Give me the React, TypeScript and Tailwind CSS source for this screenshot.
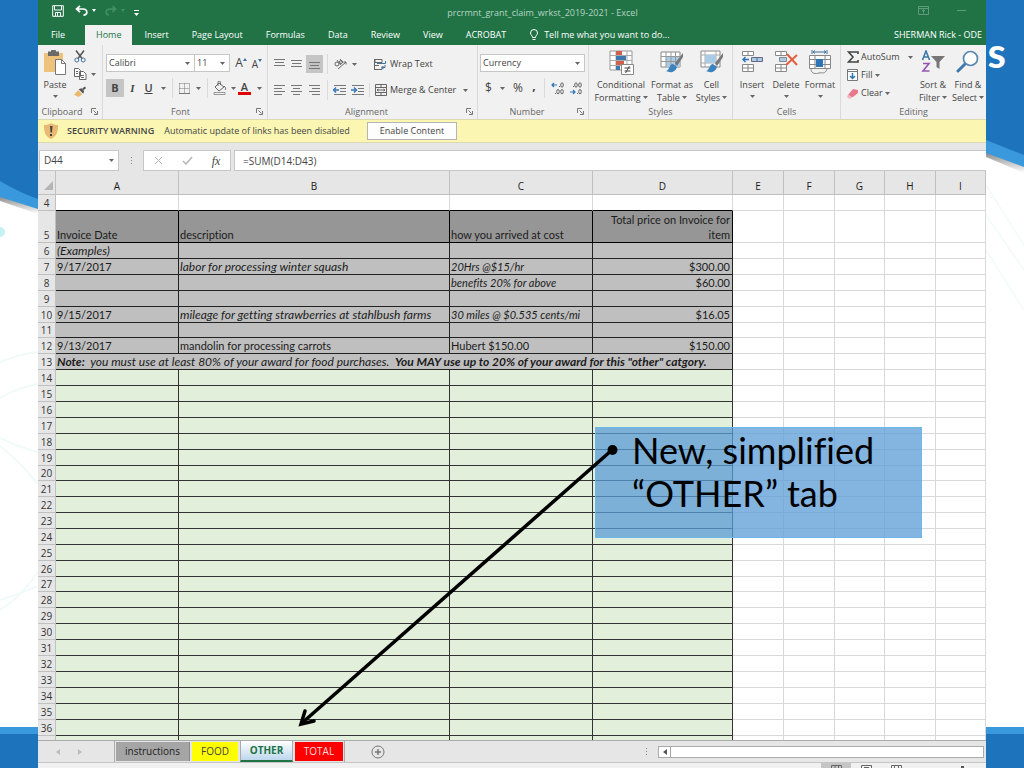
import { ReactNode } from "react";

const FONT_UI = "font-['Open_Sans','Noto_Sans',sans-serif]";
const FONT_CELL = "font-['Lato','Noto_Sans',sans-serif] [font-variant-ligatures:none]";

const Caret = ({ className = "" }: { className?: string }) => (
  <svg className={`shrink-0 ${className}`} width="5" height="3" viewBox="0 0 5 3" aria-hidden="true">
    <path d="M0 0h5L2.5 3z" fill="#666" />
  </svg>
);

const Launcher = () => (
  <button type="button" aria-label="More options" className="absolute right-1 bottom-1">
    <svg width="7" height="7" viewBox="0 0 7 7" fill="none" stroke="#777">
      <path d="M.5 5V.5H5M2.5 2.5l3 3M6.5 3v3.5H3" />
    </svg>
  </button>
);

const Group = ({
  label,
  className,
  launcher,
  children,
}: {
  label: string;
  className: string;
  launcher?: boolean;
  children: ReactNode;
}) => (
  <section aria-label={label} className={`relative flex h-[74px] flex-col ${className}`}>
    <div className="h-[60px]">{children}</div>
    <p className="text-center leading-[14px] text-[#666]">{label}</p>
    {launcher && <Launcher />}
  </section>
);

const Divider = () => <span className="h-5 w-px shrink-0 bg-[#dadada]" />;

const Combo = ({ label, value, className }: { label: string; value: string; className: string }) => (
  <span className={`flex h-[18px] items-center border border-[#c6c6c6] bg-white pr-1 ${className}`}>
    <select aria-label={label} className="min-w-0 flex-1 appearance-none bg-transparent pl-0.5 leading-4 outline-none">
      <option>{value}</option>
    </select>
    <Caret />
  </span>
);

const Tool = ({
  label,
  active,
  className = "",
  children,
}: {
  label: string;
  active?: boolean;
  className?: string;
  children: ReactNode;
}) => (
  <button
    type="button"
    aria-label={label}
    className={`flex h-[18px] shrink-0 items-center justify-center ${active ? "bg-[#c5c5c5]" : ""} ${className}`}
  >
    {children}
  </button>
);

const BigTool = ({
  lines,
  inlineCaret,
  className,
  children,
}: {
  lines: string[];
  inlineCaret?: boolean;
  className: string;
  children: ReactNode;
}) => (
  <button type="button" className={`flex shrink-0 flex-col items-center pt-[5px] leading-[13px] whitespace-nowrap ${className}`}>
    <span className="flex h-7 items-start">{children}</span>
    {lines.map((line, i) => (
      <span key={line} className="flex items-center gap-0.5">
        {line}
        {inlineCaret && i === lines.length - 1 && <Caret />}
      </span>
    ))}
    {!inlineCaret && <Caret className="mt-1" />}
  </button>
);

const Lines = ({ rows }: { rows: [number, number, number][] }) => (
  <svg width="12" height="12" viewBox="0 0 12 12" stroke="#777" aria-hidden="true">
    {rows.map(([x1, x2, y]) => (
      <path key={y} d={`M${x1} ${y + 0.5}H${x2}`} />
    ))}
  </svg>
);

const Indent = ({ right }: { right?: boolean }) => (
  <svg width="14" height="12" viewBox="0 0 14 12" fill="none" aria-hidden="true">
    <path d="M1 1.5h12M7 4.5h6M7 7.5h6M1 10.5h12" stroke="#777" />
    <path d={right ? "M0 6h4M3 3.5L5.5 6 3 8.5" : "M2 6h4M3 3.5L.5 6 3 8.5"} stroke="#2f75b5" strokeWidth="1.5" />
  </svg>
);

const Decimal = ({ label, increase }: { label: string; increase?: boolean }) => (
  <Tool label={label} className="w-[18px]">
    <svg width="14" height="13" viewBox="0 0 14 13" fill="none" aria-hidden="true">
      <g stroke="#666">
        <ellipse cx="11" cy="3" rx="1.3" ry="2.2" />
        <ellipse cx="11" cy="9.7" rx="1.3" ry="2.2" />
        {increase ? <ellipse cx="7" cy="9.7" rx="1.3" ry="2.2" /> : <ellipse cx="7" cy="3" rx="1.3" ry="2.2" />}
      </g>
      <path d={increase ? "M8 4.5h1M4 11.5h1" : "M4 4.5h1M8 11.5h1"} stroke="#666" />
      <path d={increase ? "M1 3h5M3 1L1 3l2 2" : "M1 10h5M4 8l2 2-2 2"} stroke="#2f75b5" strokeWidth="1.2" />
    </svg>
  </Tool>
);

const Brush = () => (
  <>
    <path d="M23 3l-8 10 2 3 6-9z" fill="#777" />
    <path d="M13 14c-4 0-3 6-7 7 4 2 9 2 11-4z" fill="#3c82bf" />
  </>
);

const TitleBar = () => (
  <header className="relative flex h-[25px] shrink-0 items-center bg-[#217346] text-[#b5d3c2]">
    <div className="flex items-center gap-[9px] pl-[14px] pb-1">
      <button type="button" aria-label="Save">
        <svg width="12" height="12" viewBox="0 0 12 12" fill="none" stroke="#fff">
          <path d="M.7.7h10.6v10.6H.7zM2.5 1v4h7V1M3.5 11V7.5h5V11M5.5 8v3" />
        </svg>
      </button>
      <button type="button" aria-label="Undo" className="flex items-center gap-1 pl-0.5">
        <svg width="13" height="11" viewBox="0 0 13 11" fill="none" stroke="#fff" strokeWidth="1.7">
          <path d="M5 .8L1.5 4 5 7.2M1.5 4H8c5 0 5 6 .5 6.2" />
        </svg>
        <svg width="4" height="3" viewBox="0 0 4 3"><path d="M0 0h4L2 3z" fill="#fff" /></svg>
      </button>
      <button type="button" aria-label="Redo" className="flex items-center gap-1">
        <svg width="12" height="11" viewBox="0 0 13 11" fill="none" stroke="#448e64" strokeWidth="1.7">
          <path d="M8 .8L11.5 4 8 7.2M11.5 4H5C0 4 0 10 4.5 10.2" />
        </svg>
        <svg width="4" height="3" viewBox="0 0 4 3"><path d="M0 0h4L2 3z" fill="#448e64" /></svg>
      </button>
      <button type="button" aria-label="Customize toolbar" className="pt-1">
        <svg width="5" height="6" viewBox="0 0 5 6"><path d="M0 0h5v1H0zM0 3h5L2.5 6z" fill="#fff" /></svg>
      </button>
    </div>
    <h1 className="flex-1 pl-7 text-center text-[9px]">prcrmnt_grant_claim_wrkst_2019-2021 - Excel</h1>
    <div className="flex items-center gap-7 pr-5 pb-1">
      <button type="button" aria-label="Ribbon display options">
        <svg width="11" height="9" viewBox="0 0 11 9" fill="none" stroke="#5f9d7a">
          <path d="M.5.5h10v8H.5zM.5 2.5h10M5.5 7.5v-4M4 5l1.5-1.5L7 5" />
        </svg>
      </button>
      <button type="button" aria-label="Minimize">
        <svg width="9" height="9" viewBox="0 0 9 9" stroke="#5f9d7a"><path d="M0 4.5h9" /></svg>
      </button>
    </div>
  </header>
);

const TABS = ["Insert", "Page Layout", "Formulas", "Data", "Review", "View", "ACROBAT"];

const TabBar = () => (
  <nav className="flex h-5 shrink-0 items-stretch gap-px bg-[#217346] text-[9px] text-white">
    <button type="button" className="w-10 shrink-0">File</button>
    <button type="button" className="ml-1.5 bg-[#f1f1f1] px-[11px] text-[#217346]">Home</button>
    {TABS.map((tab) => (
      <button type="button" key={tab} className="px-[11px] whitespace-nowrap">{tab}</button>
    ))}
    <button type="button" className="ml-3 flex items-center gap-1.5 whitespace-nowrap">
      <svg width="8" height="12" viewBox="0 0 8 12" fill="none" stroke="#fff">
        <path d="M2.5 8.5c0-2-2-2.5-2-4.5a3.5 3.5 0 0 1 7 0c0 2-2 2.5-2 4.5zM2.5 10.5h3" />
      </svg>
      Tell me what you want to do...
    </button>
    <span className="ml-auto self-center pr-1 whitespace-nowrap">SHERMAN Rick - ODE</span>
  </nav>
);

const ClipboardGroup = () => (
  <Group label="Clipboard" launcher className="w-[65px] border-r border-[#dadada] pr-4">
    <div className="flex">
      <BigTool lines={["Paste"]} className="w-[34px]">
        <svg width="24" height="25" viewBox="0 0 24 25">
          <path d="M1 3h19v19H1z" fill="#eec27c" />
          <path d="M5 1.5h3a2.5 2.5 0 0 1 5 0h3V6H5z" fill="#6a6a6a" />
          <path d="M12.5 9.5h6l4 4v11h-10z" fill="#fff" stroke="#777" />
          <path d="M18.5 9.5v4h4" fill="none" stroke="#777" />
        </svg>
      </BigTool>
      <div className="flex flex-col items-start gap-0.5 pt-[3px] pl-0.5">
        <Tool label="Cut" className="h-4! w-3">
          <svg width="12" height="13" viewBox="0 0 12 13" fill="none">
            <path d="M2 .5l6 8M10 .5l-6 8" stroke="#555" strokeWidth="1.5" />
            <circle cx="2.8" cy="10" r="2" stroke="#41719c" />
            <circle cx="9.2" cy="10" r="2" stroke="#41719c" />
          </svg>
        </Tool>
        <Tool label="Copy" className="h-4! gap-1">
          <svg width="13" height="12" viewBox="0 0 13 12" fill="#fff" stroke="#666">
            <path d="M.5.5h4l2 2v6h-6zM5.5 3.5h4l2.5 2.5v5.5H5.5zM2 3.5h2M2 5.5h2M7 7.5h3M7 9.5h3" />
          </svg>
          <Caret />
        </Tool>
        <Tool label="Format Painter" className="h-4! w-3">
          <svg width="13" height="12" viewBox="0 0 13 12">
            <path d="M9 2l3-2 1 2-3 2zM5 3l5 5 1-3-3-3z" fill="#555" />
            <path d="M4.5 4l4.5 4.5-4 3L0 9z" fill="#eab96e" />
          </svg>
        </Tool>
      </div>
    </div>
  </Group>
);

const FontGroup = () => (
  <Group label="Font" launcher className="w-[165px] border-r border-[#dadada] pr-3 pl-[3px]">
    <div className="flex items-center pt-[9px]">
      <Combo label="Font name" value="Calibri" className="w-[89px] shrink-0" />
      <Combo label="Font size" value="11" className="w-[35px] shrink-0 border-l-0" />
      <Tool label="Increase font size" className="w-[18px] pl-1 text-[12px]">
        A<svg className="mb-2" width="4" height="3" viewBox="0 0 4 3"><path d="M0 3h4L2 0z" fill="#41719c" /></svg>
      </Tool>
      <Tool label="Decrease font size" className="w-[18px] pt-0.5 text-[10px]">
        A<svg className="mb-2" width="4" height="3" viewBox="0 0 4 3"><path d="M0 0h4L2 3z" fill="#41719c" /></svg>
      </Tool>
    </div>
    <div className="flex items-center pt-1.5 text-[11px]">
      <Tool label="Bold" active className="w-[18px] font-bold">B</Tool>
      <Tool label="Italic" className="w-[17px] font-['Liberation_Serif',serif] font-bold italic">I</Tool>
      <Tool label="Underline" className="w-7 gap-2"><span className="font-semibold underline">U</span><Caret /></Tool>
      <span className="w-[3px] shrink-0" />
      <Divider />
      <Tool label="Borders" className="w-[34px] gap-1.5">
        <svg width="11" height="11" viewBox="0 0 11 11" fill="none" stroke="#777">
          <path d="M.5.5h10v10M.5.5v10M5.5.5v10M.5 5.5h10" strokeDasharray="1 1" />
          <path d="M0 10.5h11" />
        </svg>
        <Caret />
      </Tool>
      <Divider />
      <span className="w-1 shrink-0" />
      <Tool label="Fill color" className="w-6 gap-1">
        <svg width="14" height="14" viewBox="0 0 14 14" fill="none" stroke="#666">
          <path d="M6 2L2 6l4 4 5-4zM5 5V1.5a1 1 0 0 1 2.5 0V4M11 5c2 2 2 3 1 4" />
          <path d="M1 11.5h11v2H1z" stroke="#999" />
        </svg>
        <Caret />
      </Tool>
      <Tool label="Font color" className="w-7 gap-1.5">
        <span className="flex flex-col items-center">
          <span className="h-[11px] text-[11px] leading-[11px] font-semibold">A</span>
          <span className="h-[3px] w-[13px] bg-[#e00000]" />
        </span>
        <Caret />
      </Tool>
    </div>
  </Group>
);

const AlignmentGroup = () => (
  <Group label="Alignment" launcher className="w-[210px] border-r border-[#dadada] pr-3">
    <div className="flex items-center pt-[9px] pl-[3px]">
      <Tool label="Top align" className="w-[17px]"><Lines rows={[[0, 11, 1], [1, 10, 4], [0, 11, 7]]} /></Tool>
      <Tool label="Middle align" className="w-[18px]"><Lines rows={[[0, 11, 2], [1, 10, 5], [0, 11, 8]]} /></Tool>
      <Tool label="Bottom align" active className="w-[17px]"><Lines rows={[[0, 11, 4], [1, 10, 7], [0, 11, 10]]} /></Tool>
      <span className="w-1 shrink-0" />
      <Divider />
      <Tool label="Orientation" className="w-[34px] gap-1">
        <svg width="14" height="12" viewBox="0 0 14 12" fill="none" stroke="#666">
          <circle cx="3" cy="6" r="2" />
          <path d="M3 2l4 5M6 1l3 4" />
          <circle cx="7" cy="4" r="1.5" />
          <path d="M4 11l8-7M9.5 4H12v2.5" />
        </svg>
        <Caret />
      </Tool>
      <span className="w-2 shrink-0" />
      <button type="button" className="flex items-center gap-[3px] pl-1 whitespace-nowrap">
        <svg width="13" height="13" viewBox="0 0 13 13" fill="none" stroke="#666">
          <path d="M.5 1v11M1 1.5h7v3H1zM1 7.5h4M1 11.5h7v-3" />
          <path d="M3 5.5h8.5V3M8 9.5h3V7M9.5 8L8 9.5 9.5 11" stroke="#41719c" />
        </svg>
        Wrap Text
      </button>
    </div>
    <div className="flex items-center pt-1.5 pl-[3px]">
      <Tool label="Align left" className="w-[17px]"><Lines rows={[[0, 11, 1], [0, 8, 4], [0, 11, 7], [0, 8, 10]]} /></Tool>
      <Tool label="Center" className="w-[18px]"><Lines rows={[[0, 11, 1], [2, 9, 4], [0, 11, 7], [2, 9, 10]]} /></Tool>
      <Tool label="Align right" className="w-[17px]"><Lines rows={[[0, 11, 1], [3, 11, 4], [0, 11, 7], [3, 11, 10]]} /></Tool>
      <span className="w-1 shrink-0" />
      <Divider />
      <span className="w-[3px] shrink-0" />
      <Tool label="Decrease indent" className="w-[18px]"><Indent /></Tool>
      <Tool label="Increase indent" className="w-[18px]"><Indent right /></Tool>
      <span className="w-0.5 shrink-0" />
      <button type="button" className="flex items-center gap-[3px] border-l border-[#dadada] pl-[5px] whitespace-nowrap">
        <svg width="12" height="12" viewBox="0 0 12 12" fill="none" stroke="#666">
          <path d="M.5.5h11v11H.5zM.5 3.5h11M.5 8.5h11M6 .5v3M6 8.5v3M2 6h8M3.5 5L2 6l1.5 1M8.5 5L10 6 8.5 7" />
        </svg>
        Merge &amp; Center
        <Caret className="ml-1" />
      </button>
    </div>
  </Group>
);

const NumberGroup = () => (
  <Group label="Number" launcher className="w-[111px] border-r border-[#dadada] pr-3">
    <div className="flex pt-[9px] pl-0.5">
      <Combo label="Number format" value="Currency" className="w-[105px] shrink-0" />
    </div>
    <div className="flex items-center pt-1.5 pl-1 text-[12px]">
      <Tool label="Accounting format" className="w-[26px] gap-2">$<Caret /></Tool>
      <Tool label="Percent style" className="w-5">%</Tool>
      <Tool label="Comma style" className="w-3 pb-1 font-bold">,</Tool>
      <span className="w-1 shrink-0" />
      <Divider />
      <span className="w-1 shrink-0" />
      <Decimal label="Increase decimal" increase />
      <Decimal label="Decrease decimal" />
    </div>
  </Group>
);

const StylesGroup = () => (
  <Group label="Styles" className="w-[144px] border-r border-[#dadada]">
    <div className="flex pl-0.5">
      <BigTool lines={["Conditional", "Formatting"]} inlineCaret className="w-[60px]">
        <svg width="25" height="25" viewBox="0 0 25 25" fill="none">
          <path d="M1 1h22v19H1z" fill="#fff" stroke="#999" />
          <path d="M1 5.5h22M1 10.5h22M1 15.5h22M7 1v19M18 1v19" stroke="#aaa" />
          <path d="M7 1h6v4H7zM7 11h8v4H7z" fill="#d0604d" />
          <path d="M7 6h10v4H7zM7 16h4v4H7z" fill="#3f78ad" />
          <path d="M12.5 14.5h12v10h-12z" fill="#fff" stroke="#888" />
          <path d="M15.5 18h6M15.5 21h6M20.5 16l-4 7" stroke="#444" />
        </svg>
      </BigTool>
      <BigTool lines={["Format as", "Table"]} inlineCaret className="w-[42px]">
        <svg width="24" height="24" viewBox="0 0 24 24" fill="none">
          <path d="M1 2h19v15H1z" fill="#fff" stroke="#888" />
          <path d="M6 7h14v10H6z" fill="#a9cbe6" />
          <path d="M1 6.5h19M1 11.5h19M6 2v15M11 2v15M15.5 2v15" stroke="#999" />
          <Brush />
        </svg>
      </BigTool>
      <BigTool lines={["Cell", "Styles"]} inlineCaret className="w-[37px]">
        <svg width="24" height="24" viewBox="0 0 24 24" fill="none">
          <path d="M1 1h19v16H1z" fill="#fff" stroke="#888" />
          <path d="M1 5h19M1 13h19M5 1v16M16 1v16" stroke="#aaa" />
          <path d="M5 5h11v8H5z" fill="#a9cbe6" />
          <Brush />
        </svg>
      </BigTool>
    </div>
  </Group>
);

const CellsGroup = () => (
  <Group label="Cells" className="w-[108px] border-r border-[#dadada]">
    <div className="flex pl-0.5">
      <BigTool lines={["Insert"]} className="w-[34px]">
        <svg width="22" height="23" viewBox="0 0 22 23" fill="#fff" stroke="#888">
          <path d="M1.5 1.5h11v4h-11zM7 1.5v4M1.5 14.5h11v7h-11zM7 14.5v7M1.5 18h11" />
          <path d="M10.5 7.5h11v4h-11zM16 7.5v4" fill="#a9cbe6" stroke="#668" />
          <path d="M2 9.5h6M4.5 7L2 9.5 4.5 12" fill="none" stroke="#2f75b5" strokeWidth="1.5" />
        </svg>
      </BigTool>
      <BigTool lines={["Delete"]} className="w-[34px]">
        <svg width="24" height="23" viewBox="0 0 24 23" fill="#fff" stroke="#888">
          <path d="M1.5 1.5h11v4h-11zM7 1.5v4M1.5 14.5h11v7h-11zM7 14.5v7M1.5 18h11" />
          <path d="M5.5 7.5h7v4h-7z" fill="#a9cbe6" />
          <path d="M13 4l10 11M23 5L12 15" fill="none" stroke="#e0603f" strokeWidth="2" />
        </svg>
      </BigTool>
      <BigTool lines={["Format"]} className="w-[34px]">
        <svg width="24" height="25" viewBox="0 0 24 25" fill="none" stroke="#888">
          <path d="M1.5 5.5h21v13h-21z" fill="#fff" />
          <path d="M1.5 9.5h21M1.5 14.5h21M7 5.5v13M17 5.5v13M3 19c0 5 5 5 8 4s6 2 8-4" />
          <path d="M8 9h7v8H8z" fill="#2f75b5" stroke="none" />
          <path d="M4 0v4M19 0v4M5 2h13M7 .5L5 2l2 1.5M16 .5L18 2l-2 1.5" stroke="#41719c" />
        </svg>
      </BigTool>
    </div>
  </Group>
);

const EditingGroup = () => (
  <Group label="Editing" className="min-w-0 flex-1">
    <div className="flex">
      <div className="flex flex-1 flex-col items-start gap-1 pt-[5px] pl-1.5 leading-[14px]">
        <button type="button" className="flex items-center gap-0.5">
          <svg width="12" height="12" viewBox="0 0 12 12" fill="none" stroke="#444" strokeWidth="1.6">
            <path d="M11 3V1H1.5L6 6l-4.5 5H11V9" />
          </svg>
          AutoSum
          <Caret className="ml-1.5" />
        </button>
        <button type="button" className="flex items-center gap-[3px]">
          <svg width="11" height="12" viewBox="0 0 11 12" fill="#fff" stroke="#777">
            <path d="M.5.5h10v11H.5zM.5 2.5h10" />
            <path d="M5.5 4v5M3 7l2.5 2.5L8 7" fill="none" stroke="#2f75b5" strokeWidth="1.5" />
          </svg>
          Fill <Caret />
        </button>
        <button type="button" className="flex items-center gap-0.5">
          <svg width="12" height="11" viewBox="0 0 12 11">
            <path d="M1 7l5-6 5 1v3l-5 4-4 .5z" fill="#e8788c" />
            <path d="M1 6.5L5 9l-1 1.5H1.5L0 9z" fill="#f6b6c0" />
          </svg>
          Clear <Caret />
        </button>
      </div>
      <BigTool lines={["Sort &", "Filter"]} inlineCaret className="w-[34px]">
        <svg width="24" height="24" viewBox="0 0 24 24" fill="none" strokeWidth="1.6">
          <path d="M1.5 10L5 1l3.5 9M3 7h4" stroke="#3f78ad" />
          <path d="M2 13.5h6L2 21h6.5" stroke="#9457b0" />
          <path d="M10 6h14l-5.5 6v7l-3-2v-5z" fill="#777" />
        </svg>
      </BigTool>
      <BigTool lines={["Find &", "Select"]} inlineCaret className="w-[36px]">
        <svg width="24" height="24" viewBox="0 0 24 24" fill="none">
          <path d="M9 14l-7 7" stroke="#3f78ad" strokeWidth="3" strokeLinecap="round" />
          <circle cx="14.5" cy="8.5" r="7" fill="#fff" stroke="#5b87ad" strokeWidth="1.7" />
        </svg>
      </BigTool>
    </div>
  </Group>
);

const SecurityBar = () => (
  <div className="flex h-6 shrink-0 items-center border-y border-[#dcd9b0] bg-[#fbf7b3] pl-[5px] text-[9px] text-[#444]">
    <svg width="16" height="16" viewBox="0 0 16 16">
      <path d="M8 0c2 1.5 4 2 7 2 0 7-1 11-7 14C2 13 1 9 1 2c3 0 5-.5 7-2z" fill="#e9b872" />
      <path d="M7 3h2.5L9 9.5H7.5zM7 11h2v2H7z" fill="#444" />
    </svg>
    <strong className="ml-2 font-semibold">SECURITY WARNING</strong>
    <span className="ml-2.5">Automatic update of links has been disabled</span>
    <button type="button" className="ml-[17px] h-[18px] border border-[#b5b5b5] bg-[#fdfdfd] px-3">Enable Content</button>
  </div>
);

const FormulaBar = () => (
  <div className="flex h-7 shrink-0 items-end bg-[#e6e6e6] text-[10px] text-[#444]">
    <span className="ml-px flex h-[21px] w-20 shrink-0 items-center border border-[#c6c6c6] bg-white pr-1">
      <input aria-label="Name box" defaultValue="D44" className="w-full min-w-0 pl-1 outline-none" />
      <Caret />
    </span>
    <span className="flex h-[21px] w-6 shrink-0 flex-col items-center justify-center gap-0.5">
      <i className="size-px bg-[#888]" />
      <i className="size-px bg-[#888]" />
      <i className="size-px bg-[#888]" />
    </span>
    <div className="flex h-[21px] w-[88px] shrink-0 items-center justify-around border border-[#c6c6c6] bg-white">
      <button type="button" aria-label="Cancel">
        <svg width="9" height="9" viewBox="0 0 9 9" stroke="#b5b5b5"><path d="M1 1l7 7M8 1L1 8" /></svg>
      </button>
      <button type="button" aria-label="Enter">
        <svg width="11" height="9" viewBox="0 0 11 9" fill="none" stroke="#b5b5b5" strokeWidth="1.5"><path d="M1 5l3 3 6-7" /></svg>
      </button>
      <button type="button" className="font-['Liberation_Serif',serif] text-[12px] italic">fx</button>
    </div>
    <input
      aria-label="Formula"
      defaultValue="=SUM(D14:D43)"
      className="ml-[3px] h-[21px] min-w-0 flex-1 border border-r-0 border-[#c6c6c6] bg-white pl-2 outline-none"
    />
  </div>
);

type Row = { n: number; cells?: string[]; italic?: boolean };

const EXAMPLES: Row[] = [
  { n: 6, cells: ["(Examples)", "", "", ""], italic: true },
  { n: 7, cells: ["9/17/2017", "labor for processing winter squash", "20Hrs @$15/hr", "$300.00"], italic: true },
  { n: 8, cells: ["", "", "benefits 20% for above", "$60.00"], italic: true },
  { n: 9 },
  { n: 10, cells: ["9/15/2017", "mileage for getting strawberries at stahlbush farms", "30 miles @ $0.535 cents/mi", "$16.05"], italic: true },
  { n: 11 },
  { n: 12, cells: ["9/13/2017", "mandolin for processing carrots", "Hubert $150.00", "$150.00"] },
];
const BLANK_ROWS = Array.from({ length: 23 }, (_, i) => 14 + i);
const COLUMNS = ["A", "B", "C", "D", "E", "F", "G", "H", "I"];

// some rows come out a pixel shorter at this zoom level
const rowHeight = (n: number) => (n === 11 || n === 20 || n === 27 ? "h-[15px]" : "h-4");

const cellStyle = (text: string, column: number, italic?: boolean) => {
  if (column === 3) return "text-right";
  if (!italic || /^\d\//.test(text)) return "";
  return column < 2 ? "text-[12px] italic" : "italic";
};

const RowHead = ({ n, tall }: { n?: number; tall?: boolean }) => (
  <th
    scope="row"
    className={`border-r border-b border-[#c0c0c0] bg-[#e6e6e6] p-0 text-center text-[10px] font-normal text-[#333] ${FONT_UI} ${
      tall ? "align-bottom" : ""
    }`}
  >
    {n}
  </th>
);

const OuterCells = () => (
  <>
    {COLUMNS.slice(4).map((c) => (
      <td key={c} className="border-r border-b border-[#d9d9d9] bg-white p-0" />
    ))}
  </>
);

const BlankRow = ({ n }: { n?: number }) => (
  <tr className={rowHeight(n ?? 0)}>
    <RowHead n={n} />
    {["A", "B", "C", "D"].map((c) => (
      <td key={c} className="border-r border-b border-[#333] bg-[#e2efda] p-0" />
    ))}
    <OuterCells />
  </tr>
);

const Sheet = () => (
  <div className="min-h-0 flex-1 overflow-hidden bg-white">
    <table className={`w-full table-fixed border-separate border-spacing-0 text-[11px] leading-[14px] text-[#1c1c1c] ${FONT_CELL}`}>
      <colgroup>
        <col className="w-[18px]" />
        <col className="w-[123px]" />
        <col className="w-[271px]" />
        <col className="w-[143px]" />
        <col className="w-[140px]" />
        <col className="w-[51px]" />
        <col className="w-[51px]" />
        <col className="w-[50px]" />
        <col className="w-[51px]" />
        <col />
      </colgroup>
      <thead>
        <tr className={`h-6 bg-[#e6e6e6] text-[10px] ${FONT_UI}`}>
          <th aria-label="Select all" className="border-r border-b border-[#c0c0c0] p-0">
            <svg className="mt-1.5 ml-1.5" width="9" height="9" viewBox="0 0 9 9"><path d="M9 0v9H0z" fill="#b5b5b5" /></svg>
          </th>
          {COLUMNS.map((c) => (
            <th key={c} scope="col" className="border-r border-b border-[#c0c0c0] p-0 pt-1.5 font-normal">{c}</th>
          ))}
        </tr>
      </thead>
      <tbody>
        <tr className="h-4">
          <RowHead n={4} />
          {["A", "B", "C", "D"].map((c) => (
            <td key={c} className="border-r border-b border-r-[#d9d9d9] border-b-black p-0" />
          ))}
          <OuterCells />
        </tr>
        <tr className="h-8">
          <RowHead n={5} tall />
          {["Invoice Date", "description", "how you arrived at cost", "Total price on Invoice for item"].map((text, i) => (
            <td
              key={text}
              className={`border-r border-b border-black bg-[#969696] p-0 pr-0.5 pl-px align-bottom leading-[15px] ${i === 3 ? "text-right" : ""}`}
            >
              {text}
            </td>
          ))}
          <OuterCells />
        </tr>
        {EXAMPLES.map(({ n, cells = ["", "", "", ""], italic }) => (
          <tr key={n} className={rowHeight(n)}>
            <RowHead n={n} />
            {cells.map((text, i) => (
              <td
                key={i}
                className={`border-r border-b border-[#222] bg-[#bfbfbf] p-0 pr-0.5 pl-px whitespace-nowrap ${cellStyle(text, i, italic)}`}
              >
                {text}
              </td>
            ))}
            <OuterCells />
          </tr>
        ))}
        <tr className="h-4">
          <RowHead n={13} />
          <td colSpan={4} className="border-r border-b border-[#222] bg-[#bfbfbf] p-0 pl-px text-[12px] whitespace-nowrap italic">
            <b>Note:</b>&nbsp; you must use at least 80% of your award for food purchases.&nbsp;{" "}
            <b>You MAY use up to 20% of your award for this "other" catgory.</b>
          </td>
          <OuterCells />
        </tr>
        {BLANK_ROWS.map((n) => (
          <BlankRow key={n} n={n} />
        ))}
        <BlankRow />
      </tbody>
    </table>
  </div>
);

const SheetTabs = () => (
  <div className="flex h-[22px] shrink-0 items-stretch border-t border-[#ababab] bg-[#e6e6e6] text-[10px]">
    <div className="flex w-[76px] shrink-0 items-center gap-[18px] pl-[18px]">
      <button type="button" aria-label="Previous sheet">
        <svg width="4" height="6" viewBox="0 0 4 6"><path d="M4 0v6L0 3z" fill="#bbb" /></svg>
      </button>
      <button type="button" aria-label="Next sheet">
        <svg width="4" height="6" viewBox="0 0 4 6"><path d="M0 0v6l4-3z" fill="#bbb" /></svg>
      </button>
    </div>
    <div className="flex items-stretch gap-0.5 border-x border-[#ababab] pl-px">
      <button type="button" className="my-px w-[74px] border-r border-[#888] bg-[#a5a5a5] text-[#222]">instructions</button>
      <button type="button" className="my-px w-[46px] bg-[#ffff00] text-[#444]">FOOD</button>
      <button type="button" className="w-[53px] border-x border-b-2 border-x-[#ababab] border-b-[#217346] bg-linear-to-b from-white to-[#bdd7ee] font-bold text-[#217346]">
        OTHER
      </button>
      <button type="button" className="my-px mr-px w-[48px] bg-[#ff0000] text-[#ffd9d9]">TOTAL</button>
    </div>
    <button type="button" aria-label="New sheet" className="ml-[26px]">
      <svg width="14" height="14" viewBox="0 0 14 14" fill="none" stroke="#777">
        <circle cx="7" cy="7" r="6" />
        <path d="M7 4v6M4 7h6" strokeWidth="1.5" />
      </svg>
    </button>
    <div className="ml-auto flex items-center gap-[11px] pr-0.5">
      <span className="flex flex-col gap-0.5">
        <i className="size-px bg-[#888]" />
        <i className="size-px bg-[#888]" />
        <i className="size-px bg-[#888]" />
      </span>
      <div className="flex h-3 w-[326px] border border-[#ababab] bg-white">
        <button type="button" aria-label="Scroll left" className="flex w-3 items-center justify-center border-r border-[#ababab]">
          <svg width="4" height="6" viewBox="0 0 4 6"><path d="M4 0v6L0 3z" fill="#555" /></svg>
        </button>
      </div>
    </div>
  </div>
);

const StatusBar = () => (
  <footer className="flex h-1.5 shrink-0 justify-end overflow-hidden border-t border-[#c6c6c6] bg-[#f1f1f1] pr-[22px]">
    <button type="button" aria-label="Normal view" className="flex h-5 w-[30px] justify-center bg-[#c5c5c5] pt-0.5">
      <svg width="11" height="10" viewBox="0 0 11 10" fill="none" stroke="#666"><path d="M.5.5h10v9H.5zM.5 3.5h10M4 .5v9M7.5.5v9" /></svg>
    </button>
    <button type="button" aria-label="Page layout view" className="flex h-5 w-[30px] justify-center pt-0.5">
      <svg width="11" height="10" viewBox="0 0 11 10" fill="none" stroke="#666"><path d="M.5.5h10v9H.5zM3 2.5h5" /></svg>
    </button>
    <button type="button" aria-label="Page break view" className="flex h-5 w-[30px] justify-center pt-0.5">
      <svg width="11" height="10" viewBox="0 0 11 10" fill="none" stroke="#666"><path d="M.5 9V.5h10V9M3.5.5v4h4v-4" /></svg>
    </button>
    <span className="mt-[3px] ml-[50px] h-4 w-[3px] bg-[#555]" />
  </footer>
);

const SlideBackground = () => (
  <div className="absolute inset-0 overflow-hidden bg-white" aria-hidden="true">
    <svg className="absolute top-0 left-0" width="38" height="768" viewBox="0 0 38 768" fill="none">
      <defs>
        <linearGradient id="edge" x1="0" y1="0" x2="0" y2="1">
          <stop offset="0" stopColor="#888" />
          <stop offset="1" stopColor="#fff" />
        </linearGradient>
      </defs>
      <path d="M0 196l38 12v6L0 201z" fill="url(#edge)" />
      <path d="M0 0h38v209L0 197z" fill="#3a98dc" />
      <path d="M0 0h38v199Q18 192 0 181z" fill="#1e73bd" />
      <circle cx="0" cy="232" r="5" fill="#c5f1f3" />
      <path
        d="M0 362q20-8 38-10M0 398q16-10 38-14M0 438q20 10 38 14M0 446q20 16 38 38M0 610q20-12 38-38M0 600q20-6 38-14"
        stroke="#f0faf9"
        strokeWidth="2"
      />
    </svg>
    <svg className="absolute top-0 right-0" width="38" height="768" viewBox="0 0 38 768" fill="none">
      <path d="M0 152l38 14v7L0 157z" fill="url(#edge)" />
      <path d="M0 0h38v167L0 153z" fill="#3a98dc" />
      <path d="M0 0h38v155L0 140z" fill="#1e73bd" />
      <path d="M0 185l38 60M0 215l38 55M0 250l38 60" stroke="#f5fbfa" strokeWidth="2" />
    </svg>
    <div className="absolute inset-x-0 bottom-0 h-[41px] border-t-[7px] border-[#3a98dc] bg-[#1e73bd]" />
    <span className={`absolute top-[27px] right-[18px] text-[42px] leading-[50px] font-bold text-white ${FONT_CELL}`}>s</span>
  </div>
);

const Callout = () => (
  <>
    <div className="absolute top-[427px] left-[595px] w-[327px] border border-[#6cb8ea] bg-[#5b9bd5]/75 pt-px pb-[22px] pl-9">
      <p className={`text-[36px] leading-[43px] text-black ${FONT_CELL}`}>
        New, simplified
        <br />
        “OTHER” tab
      </p>
    </div>
    <svg className="absolute top-[440px] left-[290px]" width="340" height="300" viewBox="290 440 340 300" fill="none">
      <path d="M612 450L302 723" stroke="#000" strokeWidth="3.5" />
      <path d="M305 711l-4 13 13-3" stroke="#000" strokeWidth="3.5" strokeLinecap="round" strokeLinejoin="miter" />
      <circle cx="612.5" cy="450" r="5" fill="#000" />
    </svg>
  </>
);

const App = () => (
  <div className={`relative h-screen overflow-hidden ${FONT_UI}`}>
    <SlideBackground />
    <main className="relative mx-[38px] flex h-full flex-col overflow-hidden bg-[#e6e6e6]">
      <TitleBar />
      <TabBar />
      <div className="flex h-[74px] shrink-0 bg-[#f1f1f1] text-[9px] text-[#444]">
        <ClipboardGroup />
        <FontGroup />
        <AlignmentGroup />
        <NumberGroup />
        <StylesGroup />
        <CellsGroup />
        <EditingGroup />
      </div>
      <SecurityBar />
      <FormulaBar />
      <Sheet />
      <SheetTabs />
      <StatusBar />
    </main>
    <Callout />
  </div>
);

export default App;
